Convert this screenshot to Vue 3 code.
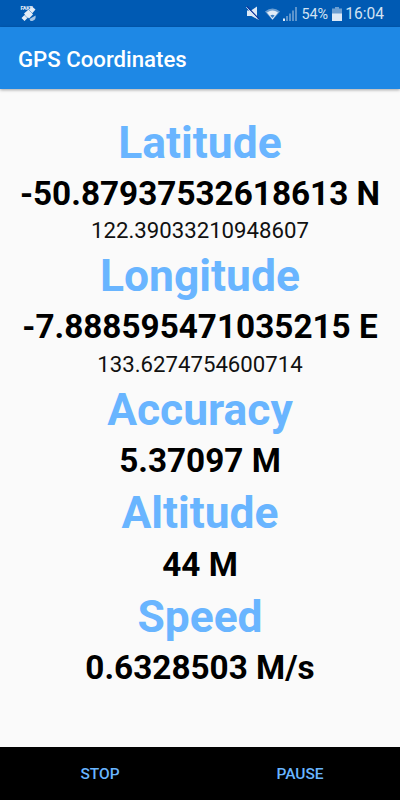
<template>
  <div class="screen">
    <div class="status-bar">
      <svg class="satellite" width="17" height="18" viewBox="0 0 17 18">
        <text x="0.500" y="5" font-size="5.5" font-weight="700" textLength="12" fill="#e3edf7">FAKE</text>
        <path d="M9 5l3-3.500 3.500 3L12 8.500l1 1-4 4-1-1L4.500 16 1.500 13l3.500-3.500-1-1 4-3.500z" fill="#e3edf7" />
        <path d="M4.500 10l3 3M9 5l3.500 3.500" stroke="#3c7fc3" stroke-width=".6" />
        <path d="M9.500 14l6-3.500c.8 3.300-1.500 6-5 5.500z" fill="#a3c4e5" />
      </svg>
      <div class="status-right">
        <svg class="mute" width="14" height="14" viewBox="0 0 14 14">
          <path d="M1 4.500h4L11 .5v12.500L5.500 10H1z" fill="#dce9f6" />
          <path d="M1 .5l12 12.500" stroke="#10349c" stroke-width="1.200" />
          <path d="M.3 1.200l12 12.500" stroke="#d3e2f2" stroke-width=".9" />
        </svg>
        <svg class="wifi" width="15" height="12" viewBox="0 0 15 12">
          <path d="M0 3.500Q7.500-2.500 15 3.500L7.500 12z" fill="#6c9fd2" />
          <path d="M2 4.500Q7.500 .5 13 4.500L7.500 11.500z" fill="#e3edf7" />
          <path d="M5.300 7.500q2.200-1.600 4.400 0l-2.200 2.500z" fill="#3c7fc3" />
        </svg>
        <svg class="signal" width="15" height="14" viewBox="0 0 15 14">
          <path d="M0 14v-2.500h2V14z" fill="#e3edf7" />
          <path d="M3 14V9h2v5zM6 14V6.500h2V14zM9 14V3.500h2V14zM12 14V0h2v14z" fill="#5b94cd" />
        </svg>
        <span class="battery-text">54%</span>
        <svg class="battery" width="10" height="14" viewBox="0 0 10 14">
          <path d="M3 0h4v1.500h3V7H0V1.500h3z" fill="#6c9fd2" />
          <path d="M0 6.500h10V14H0z" fill="#dce9f6" />
        </svg>
        <span class="clock">16:04</span>
      </div>
    </div>

    <header class="app-bar">GPS Coordinates</header>

    <main class="content">
      <section v-for="item in readings" :key="item.label">
        <h2 class="label">{{ item.label }}</h2>
        <p class="value">{{ item.value }}</p>
        <p v-if="item.fake" class="fake">{{ item.fake }}</p>
      </section>
    </main>

    <footer class="actions">
      <button type="button">STOP</button>
      <button type="button">PAUSE</button>
    </footer>
  </div>
</template>

<script setup>
import { ref } from 'vue'

const readings = ref([
  { label: 'Latitude', value: '-50.87937532618613 N', fake: '122.39033210948607' },
  { label: 'Longitude', value: '-7.888595471035215 E', fake: '133.6274754600714' },
  { label: 'Accuracy', value: '5.37097 M' },
  { label: 'Altitude', value: '44 M' },
  { label: 'Speed', value: '0.6328503 M/s' }
])
</script>

<style>
body {
  margin: 0;
}
</style>

<style scoped>
.screen {
  display: flex;
  flex-direction: column;
  width: 400px;
  height: 800px;
  overflow: hidden;
  background: #fafafa;
  font-family: Roboto, sans-serif;
}

.status-bar {
  display: flex;
  flex: none;
  justify-content: space-between;
  box-sizing: border-box;
  height: 27px;
  padding: 0 16px 0 20px;
  background: #005ab3;
  color: #d3e2f2;
}

.satellite {
  margin-top: 5px;
}

.status-right {
  display: flex;
  align-items: center;
  height: 28px;
  font-size: 14.4px;
}

.mute {
  margin: -2px 5px 0 0;
}

.wifi {
  margin-right: 3px;
}

.signal {
  margin-right: 3px;
}

.battery-text {
  margin-right: 4px;
}

.battery {
  margin-right: 3px;
}

.clock {
  font-size: 15.6px;
}

.app-bar {
  flex: none;
  height: 62px;
  padding-left: 18px;
  background: #1e88e5;
  box-shadow: 0 1px 3px rgba(0, 0, 0, 0.35);
  color: #fff;
  font-size: 22.2px;
  font-weight: 500;
  line-height: 64px;
}

.content {
  flex: 1;
  padding-top: 24.6px;
  text-align: center;
}

.label,
.value,
.fake {
  margin: 0;
  white-space: nowrap;
}

.label {
  color: #69b5ff;
  font-size: 44.4px;
  font-weight: 700;
  line-height: 59.3px;
}

.value {
  padding-bottom: 1.6px;
  color: #000;
  font-size: 33.3px;
  font-weight: 700;
  line-height: 42.8px;
}

.fake {
  padding-bottom: 2.6px;
  color: #111;
  font-size: 22.2px;
  line-height: 27.2px;
}

.actions {
  display: flex;
  flex: none;
  height: 53px;
  background: #000;
}

.actions button {
  flex: 1;
  padding: 1px 0 0;
  border: 0;
  background: none;
  color: #69b5ff;
  font-family: inherit;
  font-size: 15.5px;
  font-weight: 500;
}
</style>
